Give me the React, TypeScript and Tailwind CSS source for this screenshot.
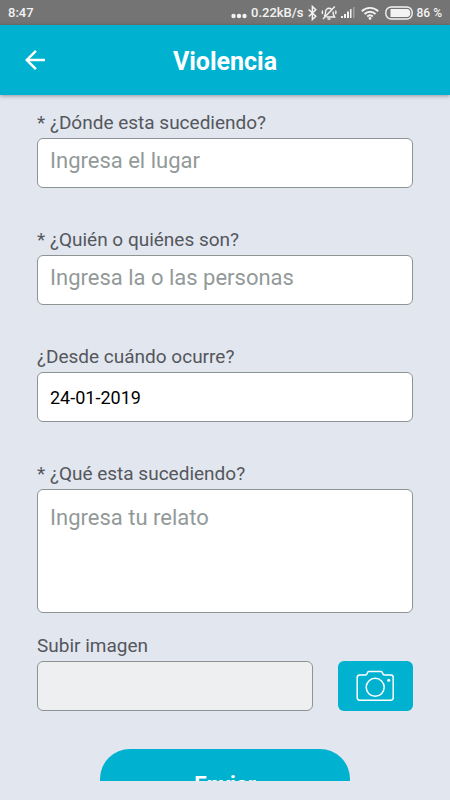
import { FormEvent, useState } from "react";

const fieldClass =
  "block w-full rounded-md border border-[#8d9494] bg-white px-3 outline-none placeholder:text-[#929a99] placeholder:opacity-100";
const labelClass = "block h-7 text-[19px] leading-[25px] text-[#54575c]";

function StatusBar() {
  return (
    <div className="flex h-[25px] shrink-0 items-center justify-between bg-[#747474] px-2 text-[13px] font-medium text-[#f3f3f3]">
      <span>8:47</span>
      <div className="flex items-center">
        <svg className="mt-[6px] mr-1" width="16" height="6" viewBox="0 0 16 6" fill="currentColor">
          <circle cx="2.5" cy="3" r="2.2" />
          <circle cx="8" cy="3" r="2.2" />
          <circle cx="13.5" cy="3" r="2.2" />
        </svg>
        <span>0.22kB/s</span>
        {/* Bluetooth */}
        <svg className="ml-1" width="9" height="16" viewBox="0 0 9 16" fill="none" stroke="currentColor" strokeWidth="1.5">
          <path d="M.7 4.5 7.8 11.3 4.4 14.5V1.5l3.4 3.2L.7 11.5" />
        </svg>
        {/* Silencio */}
        <svg className="ml-1" width="16" height="16" viewBox="0 0 16 16" fill="none" stroke="currentColor" strokeWidth="1.4">
          <path d="M3.2 11.2c1.1-1 1.300-2 1.300-3.700C4.500 4.800 6 3.300 8 3.300c1 0 1.800.3 2.500.9M12 6.500c.1 2.700.2 3.700 1.500 5.500H5.500M6.500 14h3M13.800 1.500 2 14" />
          <path d="M1.700 5.500c-.5 1-.5 2.500 0 3.500M14.500 5.500c.5 1 .5 2.500 0 3.500" />
        </svg>
        {/* Señal */}
        <svg className="ml-1" width="14" height="13" viewBox="0 0 14 13" fill="currentColor">
          <path d="M0 10h2v2H0zM3 8h2v4H3zM6 5.500h2V12H6zM9 3h1.500v9H9z" />
          <path d="M12 1h1.500v11H12z" opacity=".35" />
        </svg>
        {/* Wifi */}
        <svg className="ml-[6px]" width="18" height="14" viewBox="0 0 18 14" fill="none" stroke="currentColor" strokeWidth="1.9">
          <path d="M.8 5.200c4.600-4.500 11.800-4.500 16.400 0M3.500 8c3.100-3 7.900-3 11 0M6.200 10.500c1.600-1.500 4-1.500 5.600 0" />
          <circle cx="9" cy="12.4" r="1.4" fill="currentColor" stroke="none" />
        </svg>
        {/* Batería */}
        <svg className="ml-[6px]" width="28" height="14" viewBox="0 0 28 14">
          <rect x=".8" y="1" width="26.400" height="12" rx="5.5" fill="none" stroke="currentColor" strokeWidth="1.4" />
          <path d="M5.500 3H22c2 0 3.300 1.500 3.300 4S24 11 22 11H5.500z" fill="currentColor" />
        </svg>
        <span className="ml-1 text-xs">86 %</span>
      </div>
    </div>
  );
}

function Header() {
  return (
    <header className="z-10 grid h-[70px] shrink-0 grid-cols-[70px_1fr_70px] items-center bg-[#00b1d0] text-white shadow-[0_1px_4px_rgba(0,0,0,0.35)]">
      <button type="button" aria-label="Volver" className="flex h-full items-center justify-center">
        <svg width="20" height="20" viewBox="4 4 16 16" fill="currentColor">
          <path d="M20 11H7.83l5.590-5.590L12 4l-8 8 8 8 1.410-1.410L7.83 13H20v-2z" />
        </svg>
      </button>
      <h1 className="pt-1 text-center text-[25px] leading-8 font-bold">Violencia</h1>
    </header>
  );
}

export default function App() {
  const [lugar, setLugar] = useState("");
  const [personas, setPersonas] = useState("");
  const [fecha, setFecha] = useState("24-01-2019");
  const [relato, setRelato] = useState("");

  function handleSubmit(e: FormEvent<HTMLFormElement>) {
    e.preventDefault();
  }

  return (
    <div className="flex h-screen flex-col bg-[#e2e6ef] pb-[19px] font-[Roboto,sans-serif]">
      <StatusBar />
      <Header />

      <main className="min-h-0 flex-1 overflow-y-auto [scrollbar-width:none]">
        <form onSubmit={handleSubmit} className="px-[37px] pt-[15px]">
          <div className="space-y-[39px]">
            <div>
              <label htmlFor="lugar" className={labelClass}>
                * ¿Dónde esta sucediendo?
              </label>
              <input
                id="lugar"
                value={lugar}
                onChange={(e) => setLugar(e.target.value)}
                placeholder="Ingresa el lugar"
                className={`${fieldClass} h-[50px] pb-[6px] text-[22px]`}
              />
            </div>

            <div>
              <label htmlFor="personas" className={labelClass}>
                * ¿Quién o quiénes son?
              </label>
              <input
                id="personas"
                value={personas}
                onChange={(e) => setPersonas(e.target.value)}
                placeholder="Ingresa la o las personas"
                className={`${fieldClass} h-[50px] pb-[6px] text-[22px]`}
              />
            </div>

            <div>
              <label htmlFor="fecha" className={labelClass}>
                ¿Desde cuándo ocurre?
              </label>
              <input
                id="fecha"
                value={fecha}
                onChange={(e) => setFecha(e.target.value)}
                className={`${fieldClass} h-[50px] text-lg text-black`}
              />
            </div>

            <div>
              <label htmlFor="relato" className={labelClass}>
                * ¿Qué esta sucediendo?
              </label>
              <textarea
                id="relato"
                value={relato}
                onChange={(e) => setRelato(e.target.value)}
                placeholder="Ingresa tu relato"
                className={`${fieldClass} h-[124px] resize-none py-3 text-[22px] leading-8`}
              />
            </div>
          </div>

          {/* Imagen adjunta */}
          <div className="mt-5">
            <label htmlFor="imagen" className={labelClass}>
              Subir imagen
            </label>
            <div className="flex gap-[25px]">
              <input
                id="imagen"
                readOnly
                className="h-[50px] min-w-0 flex-1 rounded-md border border-[#8d9494] bg-[#eeeff1] px-3 outline-none"
              />
              <button
                type="button"
                aria-label="Tomar foto"
                className="flex h-[50px] w-[75px] items-center justify-center rounded-md bg-[#00b1d0] text-white"
              >
                <svg width="40" height="32" viewBox="0.8 0.5 40 32" fill="none" stroke="currentColor" strokeWidth="1.5">
                  <path d="M4.500 5.500H10c1 0 1.700-.4 1.900-1.200l.3-1c.2-.9.600-1.300 1.500-1.300h12c.9 0 1.400.4 1.600 1.300l.3 1c.2.8.900 1.200 1.900 1.200h6c1.700 0 2.500 1 2.500 2.500v20c0 1.700-.8 2.700-2.500 2.700h-31c-1.700 0-2.500-1-2.500-2.700V8c0-1.500.8-2.500 2.500-2.500z" />
                  <circle cx="20" cy="17.8" r="9" />
                  <circle cx="33.5" cy="10.8" r="1.5" fill="currentColor" stroke="none" />
                </svg>
              </button>
            </div>
          </div>

          <div className="mt-[38px] px-[63px]">
            <button
              type="submit"
              className="h-[70px] w-full rounded-[30px] bg-[#00b1d0] text-[22px] font-bold text-white"
            >
              Enviar
            </button>
          </div>
        </form>
      </main>
    </div>
  );
}
